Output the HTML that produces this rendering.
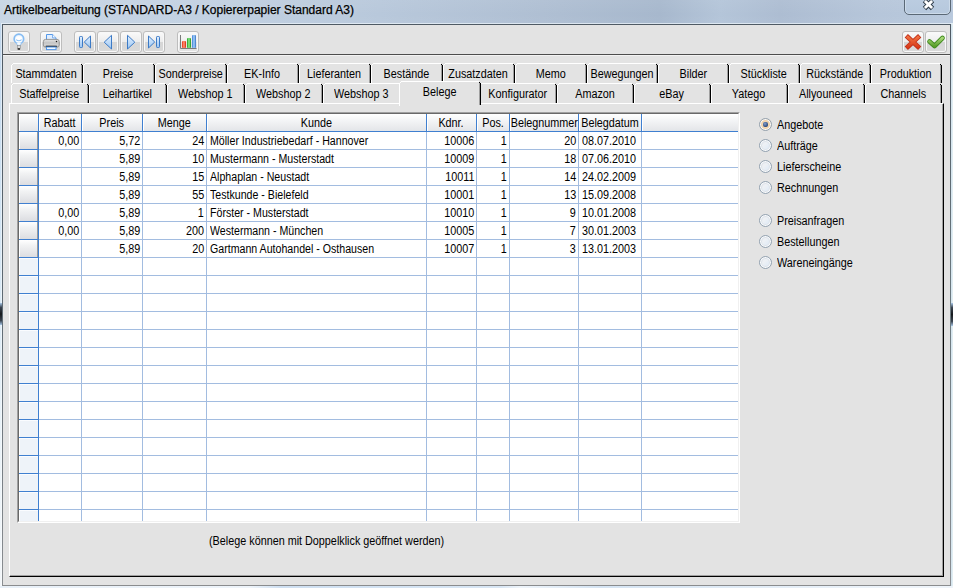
<!DOCTYPE html>
<html><head><meta charset="utf-8">
<style>
html,body{margin:0;padding:0}
body{width:953px;height:588px;overflow:hidden;position:relative;font-family:"Liberation Sans", sans-serif;
 background:#c4d5e8}
#tbar{left:0;top:0;width:953px;height:24px;background:linear-gradient(90deg,#c8d6e5 0,#c2d1e2 200px,#b8c8db 380px,#aebed2 560px,#a7b8cd 660px,#b4c5d9 720px,#adbdd2 780px,#b6c6da 880px,#b9c9dd 953px)}
#tbar2{left:0;top:0;width:953px;height:24px;background:linear-gradient(rgba(255,255,255,0.05),rgba(255,255,255,0) 60%,rgba(255,255,255,0.03))}
div,i{position:absolute;box-sizing:border-box;display:block}
.t{font-size:12px;line-height:14px;white-space:nowrap;color:#000}
.t span{display:inline-block;transform:scaleX(0.9)}
.r{text-align:right}
.c{text-align:center}
#title{left:4px;top:3px;font-size:12px;line-height:15px;color:#000;white-space:nowrap;-webkit-text-stroke:0.25px #000;text-shadow:0 0 6px rgba(255,255,255,0.35)}
#frameL{left:0;top:23px;width:2px;height:565px;background:linear-gradient(#c0d6ec 0,#d4e6f4 40%,#e8f2f8 70%,#f2f6f9 100%)}
#frameL2{left:1px;top:23px;width:1px;height:565px;background:rgba(255,255,255,0.45)}
#blobL{left:0;top:303px;width:2px;height:22px;background:linear-gradient(#a9c8e8,#3a4450 20%,#15181c 50%,#3a4450 80%,#a9c8e8)}
#client{left:2px;top:24px;width:949px;height:562px;background:#e3e3e3}
#bdT{left:2px;top:24px;width:949px;height:1px;background:#4f5a64}
#hlT{left:1px;top:23px;width:951px;height:1px;background:rgba(235,243,250,0.75)}
#bdL{left:2px;top:24px;width:1px;height:562px;background:linear-gradient(#4f5a64 0,#5e6a73 50%,#8a8e92 100%)}
#bdR{left:950px;top:24px;width:1px;height:562px;background:linear-gradient(#4f5a64 0,#6c7a80 50%,#8a8e92 100%)}
#bdB{left:2px;top:585px;width:949px;height:1px;background:#8a8c8e}
#desk{left:0;top:586px;width:953px;height:2px;background:linear-gradient(90deg,#e8f0f8 0,#eef4fa 250px,#cfe0f2 280px,#d8e6f4 500px,#eef4fa 520px,#d5e4f3 600px,#eef4fa 900px)}
#frameR{left:951px;top:23px;width:2px;height:565px;background:linear-gradient(90deg,#d0e0ec,#e6f2f4)}
#blob{left:951px;top:303px;width:2px;height:23px;background:linear-gradient(#a9c8e8,#3a4450 20%,#15181c 50%,#3a4450 80%,#a9c8e8)}
#toolbarline{left:3px;top:54px;width:947px;height:1px;background:#4d4d4d}
#toolbarline2{left:3px;top:55px;width:947px;height:1px;background:#f3f3f3}
.btn{width:22px;height:22px;border:1px solid #bdbdbd;border-radius:3px;
 background:linear-gradient(#fafafa 0,#ececec 10px,#d6d6d6 10px,#d9d9d9 100%);box-shadow:inset 0 0 0 1px #f8f8f8}
.btn.flat{background:linear-gradient(#fafafa 0,#eeeeee 10px,#e4e4e4 10px,#e2e2e2 100%)}
#panel{left:9px;top:103px;width:935px;height:474px;border-left:1px solid #fff;border-top:1px solid #fff;border-right:1px solid #000;border-bottom:1px solid #000;background:#e3e3e3}
#panel2{left:10px;top:104px;width:933px;height:472px;border-right:1px solid #a0a0a0;border-bottom:1px solid #a0a0a0}
.tab{background:#e3e3e3}
.tab .tl{left:0;top:2px;width:1px;bottom:0;background:#fff}
.tab .tt{left:2px;top:0;right:2px;height:1px;background:#fff}
.tab .tc{left:1px;top:1px;width:1px;height:1px;background:#fff}
.tab .tr{right:0;top:2px;width:1px;bottom:0;background:#000}
.tab .tc2{right:1px;top:1px;width:1px;height:1px;background:#000}
.tab .td{right:1px;top:2px;width:1px;bottom:0;background:#a0a0a0}
.tab.sel .tl{bottom:-1px}
#gridbox{left:17px;top:112px;width:723px;height:411px;border-top:1px solid #a0a0a0;border-left:1px solid #a0a0a0;border-right:1px solid #fff;border-bottom:1px solid #fff}
#gridbox2{left:18px;top:113px;width:721px;height:409px;border-top:1px solid #696969;border-left:1px solid #696969;border-right:1px solid #f0f0f0;border-bottom:1px solid #f0f0f0;background:#fff}
.hdr{background:linear-gradient(#ffffff 0,#f6f7f8 30%,#e3e5e8 100%)}
.rh{background:linear-gradient(#ffffff 0,#f2f3f4 30%,#dcdde1 100%);border-left:1px solid #fff;border-right:1px solid #9a9a9a}
.rhe{background:#eef3f9;border-left:1px solid #fff;border-top:1px solid #fafcff}
.radio{width:13px;height:13px;border-radius:50%;border:1px solid #93a2b1;background:linear-gradient(135deg,#e6e9ee 0,#eef1f5 40%,#d9e7f6 100%);box-shadow:inset 0 0 0 1px #fafbfc,inset 0 0 0 2px #dde3ea}
.radio.on{background:#f3d7b0;box-shadow:inset 0 0 0 1px #fafbfc,inset 0 0 0 2px #f0d0a8}
.radio.on::after{content:"";position:absolute;left:3px;top:3px;width:5px;height:5px;border-radius:40%;background:radial-gradient(circle at 40% 35%,#7f9ccc 0,#2b4677 75%)}
#close{left:904px;top:-4px;width:47px;height:19px;border:1px solid #5a6876;border-radius:0 0 5px 5px;background:linear-gradient(#bccde1,#b6c8dd);box-shadow:inset 0 0 0 1px #cddbea}
</style></head><body>
<div id="tbar"></div><div id="tbar2"></div>
<div id="title">Artikelbearbeitung (STANDARD-A3 / Kopiererpapier Standard A3)</div>
<div id="close"><svg width="47" height="19" style="position:absolute;left:-1px;top:-1px" viewBox="0 0 47 19"><path d="M20.5 4.5 L28.5 12.5 M28.5 4.5 L20.5 12.5" stroke="#2e3a46" stroke-width="4.8" stroke-linecap="butt"/><path d="M20.9 4.9 L28.1 12.1 M28.1 4.9 L20.9 12.1" stroke="#ffffff" stroke-width="2.8" stroke-linecap="butt"/></svg></div>
<div id="frameL"></div>
<div id="frameR"></div><div id="blob"></div><div id="frameL2"></div><div id="blobL"></div>
<div id="desk"></div>
<div id="client"></div><div id="bdT"></div><div id="hlT"></div><div id="bdL"></div><div id="bdR"></div><div id="bdB"></div>
<div id="toolbarline"></div>
<div id="toolbarline2"></div>
<div class="btn" style="left:8px;top:31px"></div>
<div class="btn" style="left:40px;top:31px"></div>
<div class="btn" style="left:74px;top:31px"></div>
<div class="btn" style="left:97px;top:31px"></div>
<div class="btn" style="left:120px;top:31px"></div>
<div class="btn" style="left:143px;top:31px"></div>
<div class="btn flat" style="left:177px;top:31px"></div>
<div class="btn" style="left:902px;top:31px"></div>
<div class="btn" style="left:925px;top:31px"></div>
<svg width="953" height="60" style="position:absolute;left:0;top:0" viewBox="0 0 953 60">
 <defs>
  <linearGradient id="gb" x1="0" y1="0" x2="0" y2="1"><stop offset="0" stop-color="#e2f0ff"/><stop offset="1" stop-color="#9cc6f2"/></linearGradient>
  <radialGradient id="bulb" cx="0.5" cy="0.5" r="0.55"><stop offset="0" stop-color="#ffffff"/><stop offset="0.55" stop-color="#f4f9ff"/><stop offset="1" stop-color="#b8daff"/></radialGradient>
  <linearGradient id="pr" x1="0" y1="0" x2="0" y2="1"><stop offset="0" stop-color="#e4e4e4"/><stop offset="0.45" stop-color="#c4c4c4"/><stop offset="0.75" stop-color="#d6d6d6"/><stop offset="1" stop-color="#b0b0b0"/></linearGradient>
  <linearGradient id="rb" x1="0" y1="0" x2="1" y2="0"><stop offset="0" stop-color="#e83010"/><stop offset="0.5" stop-color="#ff9a80"/><stop offset="1" stop-color="#d82000"/></linearGradient>
  <linearGradient id="gg" x1="0" y1="0" x2="1" y2="0"><stop offset="0" stop-color="#1e9a1e"/><stop offset="0.5" stop-color="#90ef90"/><stop offset="1" stop-color="#1a8a1a"/></linearGradient>
  <linearGradient id="bb" x1="0" y1="0" x2="1" y2="0"><stop offset="0" stop-color="#3b7fd0"/><stop offset="0.5" stop-color="#a8d2ff"/><stop offset="1" stop-color="#2f6fc0"/></linearGradient>
  <linearGradient id="xr" x1="0" y1="0" x2="0" y2="1"><stop offset="0" stop-color="#f07040"/><stop offset="1" stop-color="#d83a18"/></linearGradient>
  <linearGradient id="ck" x1="0" y1="0" x2="0" y2="1"><stop offset="0" stop-color="#a8d878"/><stop offset="1" stop-color="#5a9e2a"/></linearGradient>
 </defs>
 <!-- lightbulb -->
 <circle cx="18.9" cy="38.9" r="4.8" fill="url(#bulb)" stroke="#86bcf2" stroke-width="1.6"/>
 <path d="M16.3 42.3 L17.3 45.4 L20.5 45.4 L21.5 42.3 Z" fill="#f6faff" stroke="#93c3f2" stroke-width="0.9"/>
 <circle cx="18.9" cy="39.6" r="3.2" fill="#ffffff"/>
 <path d="M16.2 39.6 Q18.9 42 21.6 39.6" fill="none" stroke="#8ec0f2" stroke-width="1.1"/>
 <rect x="17.3" y="45.5" width="3.1" height="3" fill="#dcdcdc" stroke="#8a8a8a" stroke-width="0.6"/>
 <rect x="17.6" y="48.3" width="2.5" height="1.4" rx="0.5" fill="#1e1e1e"/>
 <!-- printer -->
 <path d="M46.5 34.5 L52.6 34.5 L56 37.9 L56 40.5 L46.5 40.5 Z" fill="#e0eeff" stroke="#5598e8" stroke-width="1"/>
 <path d="M52.6 34.5 L52.6 37.9 L56 37.9" fill="#ffffff" stroke="#5598e8" stroke-width="0.8"/>
 <rect x="43.4" y="39.4" width="15.8" height="7.8" rx="2.2" fill="url(#pr)" stroke="#8e8e8e" stroke-width="0.9"/>
 <rect x="45.8" y="45.7" width="11" height="1.3" fill="#1c1c1c"/>
 <rect x="46.5" y="47" width="9.5" height="2.6" fill="#f2f8ff" stroke="#5598e8" stroke-width="1"/>
 <circle cx="56.5" cy="41.6" r="0.75" fill="#1c1c1c"/>
 <!-- first -->
 <rect x="79.5" y="36.5" width="3" height="11" rx="0.8" fill="url(#gb)" stroke="#3c7ac6" stroke-width="1"/>
 <path d="M90.5 36 L84.3 42 L90.5 48 Z" fill="url(#gb)" stroke="#3c7ac6" stroke-width="1" stroke-linejoin="round"/>
 <!-- prev -->
 <path d="M111.5 35.3 L104.2 42.2 L111.5 49 Z" fill="url(#gb)" stroke="#3c7ac6" stroke-width="1" stroke-linejoin="round"/>
 <!-- next -->
 <path d="M127.5 35.3 L134.8 42.2 L127.5 49 Z" fill="url(#gb)" stroke="#3c7ac6" stroke-width="1" stroke-linejoin="round"/>
 <!-- last -->
 <path d="M148.5 36 L154.7 42 L148.5 48 Z" fill="url(#gb)" stroke="#3c7ac6" stroke-width="1" stroke-linejoin="round"/>
 <rect x="156.5" y="36.5" width="3" height="11" rx="0.8" fill="url(#gb)" stroke="#3c7ac6" stroke-width="1"/>
 <!-- chart -->
 <path d="M180.5 35 L180.5 48.5 L196.5 48.5" fill="none" stroke="#7a7a7a" stroke-width="1"/>
 <rect x="182" y="41" width="4" height="7" rx="1" fill="url(#rb)"/>
 <rect x="187" y="38" width="4" height="10" rx="1" fill="url(#gg)"/>
 <rect x="192" y="35" width="4" height="13" rx="1" fill="url(#bb)"/>
 <!-- cancel X -->
 <path d="M906.3 35.8 L919.7 48.2 M919.7 35.8 L906.3 48.2" stroke="#c3301a" stroke-width="4.8" stroke-linecap="butt"/>
 <path d="M906.9 36.4 L919.1 47.6 M919.1 36.4 L906.9 47.6" stroke="url(#xr)" stroke-width="3.0" stroke-linecap="butt"/>
 <!-- ok check -->
 <path d="M929.5 41.5 L934.5 46 L942.5 38" fill="none" stroke="#3f8a1e" stroke-width="4.6" stroke-linecap="round" stroke-linejoin="round"/>
 <path d="M929.5 41.5 L934.5 46 L942.5 38" fill="none" stroke="url(#ck)" stroke-width="3" stroke-linecap="round" stroke-linejoin="round"/>
</svg>
<div class="tab" style="left:11px;top:63px;width:72px;height:20px"><i class="tl"></i><i class="tt"></i><i class="tr"></i><i class="td"></i><i class="tc"></i><i class="tc2"></i></div>
<div class="t c" style="left:-153.5px;width:400px;top:67px;"><span style="transform-origin:50% 0">Stammdaten</span></div>
<div class="tab" style="left:83px;top:63px;width:72px;height:20px"><i class="tl"></i><i class="tt"></i><i class="tr"></i><i class="td"></i><i class="tc"></i><i class="tc2"></i></div>
<div class="t c" style="left:-81.5px;width:400px;top:67px;"><span style="transform-origin:50% 0">Preise</span></div>
<div class="tab" style="left:155px;top:63px;width:72px;height:20px"><i class="tl"></i><i class="tt"></i><i class="tr"></i><i class="td"></i><i class="tc"></i><i class="tc2"></i></div>
<div class="t c" style="left:-9.5px;width:400px;top:67px;"><span style="transform-origin:50% 0">Sonderpreise</span></div>
<div class="tab" style="left:227px;top:63px;width:72px;height:20px"><i class="tl"></i><i class="tt"></i><i class="tr"></i><i class="td"></i><i class="tc"></i><i class="tc2"></i></div>
<div class="t c" style="left:62.5px;width:400px;top:67px;"><span style="transform-origin:50% 0">EK-Info</span></div>
<div class="tab" style="left:299px;top:63px;width:72px;height:20px"><i class="tl"></i><i class="tt"></i><i class="tr"></i><i class="td"></i><i class="tc"></i><i class="tc2"></i></div>
<div class="t c" style="left:134.5px;width:400px;top:67px;"><span style="transform-origin:50% 0">Lieferanten</span></div>
<div class="tab" style="left:371px;top:63px;width:72px;height:20px"><i class="tl"></i><i class="tt"></i><i class="tr"></i><i class="td"></i><i class="tc"></i><i class="tc2"></i></div>
<div class="t c" style="left:206.5px;width:400px;top:67px;"><span style="transform-origin:50% 0">Bestände</span></div>
<div class="tab" style="left:443px;top:63px;width:72px;height:20px"><i class="tl"></i><i class="tt"></i><i class="tr"></i><i class="td"></i><i class="tc"></i><i class="tc2"></i></div>
<div class="t c" style="left:278.5px;width:400px;top:67px;"><span style="transform-origin:50% 0">Zusatzdaten</span></div>
<div class="tab" style="left:515px;top:63px;width:72px;height:20px"><i class="tl"></i><i class="tt"></i><i class="tr"></i><i class="td"></i><i class="tc"></i><i class="tc2"></i></div>
<div class="t c" style="left:350.5px;width:400px;top:67px;"><span style="transform-origin:50% 0">Memo</span></div>
<div class="tab" style="left:587px;top:63px;width:71px;height:20px"><i class="tl"></i><i class="tt"></i><i class="tr"></i><i class="td"></i><i class="tc"></i><i class="tc2"></i></div>
<div class="t c" style="left:422.0px;width:400px;top:67px;"><span style="transform-origin:50% 0">Bewegungen</span></div>
<div class="tab" style="left:658px;top:63px;width:71px;height:20px"><i class="tl"></i><i class="tt"></i><i class="tr"></i><i class="td"></i><i class="tc"></i><i class="tc2"></i></div>
<div class="t c" style="left:493.0px;width:400px;top:67px;"><span style="transform-origin:50% 0">Bilder</span></div>
<div class="tab" style="left:729px;top:63px;width:71px;height:20px"><i class="tl"></i><i class="tt"></i><i class="tr"></i><i class="td"></i><i class="tc"></i><i class="tc2"></i></div>
<div class="t c" style="left:564.0px;width:400px;top:67px;"><span style="transform-origin:50% 0">Stückliste</span></div>
<div class="tab" style="left:800px;top:63px;width:71px;height:20px"><i class="tl"></i><i class="tt"></i><i class="tr"></i><i class="td"></i><i class="tc"></i><i class="tc2"></i></div>
<div class="t c" style="left:635.0px;width:400px;top:67px;"><span style="transform-origin:50% 0">Rückstände</span></div>
<div class="tab" style="left:871px;top:63px;width:71px;height:20px"><i class="tl"></i><i class="tt"></i><i class="tr"></i><i class="td"></i><i class="tc"></i><i class="tc2"></i></div>
<div class="t c" style="left:706.0px;width:400px;top:67px;"><span style="transform-origin:50% 0">Produktion</span></div>
<div class="tab" style="left:11px;top:83px;width:78px;height:20px"><i class="tl"></i><i class="tt"></i><i class="tr"></i><i class="td"></i><i class="tc"></i><i class="tc2"></i></div>
<div class="t c" style="left:-150.5px;width:400px;top:87px;"><span style="transform-origin:50% 0">Staffelpreise</span></div>
<div class="tab" style="left:89px;top:83px;width:78px;height:20px"><i class="tl"></i><i class="tt"></i><i class="tr"></i><i class="td"></i><i class="tc"></i><i class="tc2"></i></div>
<div class="t c" style="left:-72.5px;width:400px;top:87px;"><span style="transform-origin:50% 0">Leihartikel</span></div>
<div class="tab" style="left:167px;top:83px;width:78px;height:20px"><i class="tl"></i><i class="tt"></i><i class="tr"></i><i class="td"></i><i class="tc"></i><i class="tc2"></i></div>
<div class="t c" style="left:5.5px;width:400px;top:87px;"><span style="transform-origin:50% 0">Webshop 1</span></div>
<div class="tab" style="left:245px;top:83px;width:78px;height:20px"><i class="tl"></i><i class="tt"></i><i class="tr"></i><i class="td"></i><i class="tc"></i><i class="tc2"></i></div>
<div class="t c" style="left:83.5px;width:400px;top:87px;"><span style="transform-origin:50% 0">Webshop 2</span></div>
<div class="tab" style="left:323px;top:83px;width:78px;height:20px"><i class="tl"></i><i class="tt"></i><i class="tr"></i><i class="td"></i><i class="tc"></i><i class="tc2"></i></div>
<div class="t c" style="left:161.5px;width:400px;top:87px;"><span style="transform-origin:50% 0">Webshop 3</span></div>
<div class="tab" style="left:479px;top:83px;width:78px;height:20px"><i class="tl"></i><i class="tt"></i><i class="tr"></i><i class="td"></i><i class="tc"></i><i class="tc2"></i></div>
<div class="t c" style="left:317.5px;width:400px;top:87px;"><span style="transform-origin:50% 0">Konfigurator</span></div>
<div class="tab" style="left:557px;top:83px;width:77px;height:20px"><i class="tl"></i><i class="tt"></i><i class="tr"></i><i class="td"></i><i class="tc"></i><i class="tc2"></i></div>
<div class="t c" style="left:395.0px;width:400px;top:87px;"><span style="transform-origin:50% 0">Amazon</span></div>
<div class="tab" style="left:634px;top:83px;width:77px;height:20px"><i class="tl"></i><i class="tt"></i><i class="tr"></i><i class="td"></i><i class="tc"></i><i class="tc2"></i></div>
<div class="t c" style="left:472.0px;width:400px;top:87px;"><span style="transform-origin:50% 0">eBay</span></div>
<div class="tab" style="left:711px;top:83px;width:77px;height:20px"><i class="tl"></i><i class="tt"></i><i class="tr"></i><i class="td"></i><i class="tc"></i><i class="tc2"></i></div>
<div class="t c" style="left:549.0px;width:400px;top:87px;"><span style="transform-origin:50% 0">Yatego</span></div>
<div class="tab" style="left:788px;top:83px;width:77px;height:20px"><i class="tl"></i><i class="tt"></i><i class="tr"></i><i class="td"></i><i class="tc"></i><i class="tc2"></i></div>
<div class="t c" style="left:626.0px;width:400px;top:87px;"><span style="transform-origin:50% 0">Allyouneed</span></div>
<div class="tab" style="left:865px;top:83px;width:77px;height:20px"><i class="tl"></i><i class="tt"></i><i class="tr"></i><i class="td"></i><i class="tc"></i><i class="tc2"></i></div>
<div class="t c" style="left:703.0px;width:400px;top:87px;"><span style="transform-origin:50% 0">Channels</span></div>
<div id="panel"></div>
<div id="panel2"></div>
<div class="tab sel" style="left:399px;top:81px;width:82px;height:24px"><i class="tl"></i><i class="tt"></i><i class="tr"></i><i class="td"></i><i class="tc"></i><i class="tc2"></i></div><div class="t c" style="left:240px;width:400px;top:85px;"><span style="transform-origin:50% 0">Belege</span></div>
<div id="gridbox"></div>
<div id="gridbox2"></div>
<div class="hdr" style="left:19px;top:114px;width:719px;height:17px"></div>
<div class="ln" style="left:19px;top:114px;width:1px;height:17px;background:#fff"></div>
<div class="ln" style="left:39px;top:114px;width:1px;height:17px;background:#fff"></div>
<div class="ln" style="left:82px;top:114px;width:1px;height:17px;background:#fff"></div>
<div class="ln" style="left:143px;top:114px;width:1px;height:17px;background:#fff"></div>
<div class="ln" style="left:207px;top:114px;width:1px;height:17px;background:#fff"></div>
<div class="ln" style="left:427px;top:114px;width:1px;height:17px;background:#fff"></div>
<div class="ln" style="left:477px;top:114px;width:1px;height:17px;background:#fff"></div>
<div class="ln" style="left:510px;top:114px;width:1px;height:17px;background:#fff"></div>
<div class="ln" style="left:579px;top:114px;width:1px;height:17px;background:#fff"></div>
<div class="ln" style="left:642px;top:114px;width:1px;height:17px;background:#fff"></div>
<div class="ln" style="left:39px;top:132px;width:699px;height:389px;background:#fff"></div>
<div class="rh" style="left:19px;top:132px;width:19px;height:17px"></div>
<div class="rh" style="left:19px;top:150px;width:19px;height:17px"></div>
<div class="rh" style="left:19px;top:168px;width:19px;height:17px"></div>
<div class="rh" style="left:19px;top:186px;width:19px;height:17px"></div>
<div class="rh" style="left:19px;top:204px;width:19px;height:17px"></div>
<div class="rh" style="left:19px;top:222px;width:19px;height:17px"></div>
<div class="rh" style="left:19px;top:240px;width:19px;height:17px"></div>
<div class="rhe" style="left:19px;top:258px;width:19px;height:17px"></div>
<div class="rhe" style="left:19px;top:276px;width:19px;height:17px"></div>
<div class="rhe" style="left:19px;top:294px;width:19px;height:17px"></div>
<div class="rhe" style="left:19px;top:312px;width:19px;height:17px"></div>
<div class="rhe" style="left:19px;top:330px;width:19px;height:17px"></div>
<div class="rhe" style="left:19px;top:348px;width:19px;height:17px"></div>
<div class="rhe" style="left:19px;top:366px;width:19px;height:17px"></div>
<div class="rhe" style="left:19px;top:384px;width:19px;height:17px"></div>
<div class="rhe" style="left:19px;top:402px;width:19px;height:17px"></div>
<div class="rhe" style="left:19px;top:420px;width:19px;height:17px"></div>
<div class="rhe" style="left:19px;top:438px;width:19px;height:17px"></div>
<div class="rhe" style="left:19px;top:456px;width:19px;height:17px"></div>
<div class="rhe" style="left:19px;top:474px;width:19px;height:17px"></div>
<div class="rhe" style="left:19px;top:492px;width:19px;height:17px"></div>
<div class="rhe" style="left:19px;top:510px;width:19px;height:11px"></div>
<div class="ln" style="left:19px;top:131px;width:719px;height:1px;background:#3f7fd0"></div>
<div class="ln" style="left:39px;top:149px;width:699px;height:1px;background:#a2bce0"></div>
<div class="ln" style="left:19px;top:149px;width:20px;height:1px;background:#3f7fd0"></div>
<div class="ln" style="left:39px;top:167px;width:699px;height:1px;background:#a2bce0"></div>
<div class="ln" style="left:19px;top:167px;width:20px;height:1px;background:#3f7fd0"></div>
<div class="ln" style="left:39px;top:185px;width:699px;height:1px;background:#a2bce0"></div>
<div class="ln" style="left:19px;top:185px;width:20px;height:1px;background:#3f7fd0"></div>
<div class="ln" style="left:39px;top:203px;width:699px;height:1px;background:#a2bce0"></div>
<div class="ln" style="left:19px;top:203px;width:20px;height:1px;background:#3f7fd0"></div>
<div class="ln" style="left:39px;top:221px;width:699px;height:1px;background:#a2bce0"></div>
<div class="ln" style="left:19px;top:221px;width:20px;height:1px;background:#3f7fd0"></div>
<div class="ln" style="left:39px;top:239px;width:699px;height:1px;background:#a2bce0"></div>
<div class="ln" style="left:19px;top:239px;width:20px;height:1px;background:#3f7fd0"></div>
<div class="ln" style="left:39px;top:257px;width:699px;height:1px;background:#a2bce0"></div>
<div class="ln" style="left:19px;top:257px;width:20px;height:1px;background:#3f7fd0"></div>
<div class="ln" style="left:39px;top:275px;width:699px;height:1px;background:#a2bce0"></div>
<div class="ln" style="left:19px;top:275px;width:20px;height:1px;background:#3f7fd0"></div>
<div class="ln" style="left:39px;top:293px;width:699px;height:1px;background:#a2bce0"></div>
<div class="ln" style="left:19px;top:293px;width:20px;height:1px;background:#3f7fd0"></div>
<div class="ln" style="left:39px;top:311px;width:699px;height:1px;background:#a2bce0"></div>
<div class="ln" style="left:19px;top:311px;width:20px;height:1px;background:#3f7fd0"></div>
<div class="ln" style="left:39px;top:329px;width:699px;height:1px;background:#a2bce0"></div>
<div class="ln" style="left:19px;top:329px;width:20px;height:1px;background:#3f7fd0"></div>
<div class="ln" style="left:39px;top:347px;width:699px;height:1px;background:#a2bce0"></div>
<div class="ln" style="left:19px;top:347px;width:20px;height:1px;background:#3f7fd0"></div>
<div class="ln" style="left:39px;top:365px;width:699px;height:1px;background:#a2bce0"></div>
<div class="ln" style="left:19px;top:365px;width:20px;height:1px;background:#3f7fd0"></div>
<div class="ln" style="left:39px;top:383px;width:699px;height:1px;background:#a2bce0"></div>
<div class="ln" style="left:19px;top:383px;width:20px;height:1px;background:#3f7fd0"></div>
<div class="ln" style="left:39px;top:401px;width:699px;height:1px;background:#a2bce0"></div>
<div class="ln" style="left:19px;top:401px;width:20px;height:1px;background:#3f7fd0"></div>
<div class="ln" style="left:39px;top:419px;width:699px;height:1px;background:#a2bce0"></div>
<div class="ln" style="left:19px;top:419px;width:20px;height:1px;background:#3f7fd0"></div>
<div class="ln" style="left:39px;top:437px;width:699px;height:1px;background:#a2bce0"></div>
<div class="ln" style="left:19px;top:437px;width:20px;height:1px;background:#3f7fd0"></div>
<div class="ln" style="left:39px;top:455px;width:699px;height:1px;background:#a2bce0"></div>
<div class="ln" style="left:19px;top:455px;width:20px;height:1px;background:#3f7fd0"></div>
<div class="ln" style="left:39px;top:473px;width:699px;height:1px;background:#a2bce0"></div>
<div class="ln" style="left:19px;top:473px;width:20px;height:1px;background:#3f7fd0"></div>
<div class="ln" style="left:39px;top:491px;width:699px;height:1px;background:#a2bce0"></div>
<div class="ln" style="left:19px;top:491px;width:20px;height:1px;background:#3f7fd0"></div>
<div class="ln" style="left:39px;top:509px;width:699px;height:1px;background:#a2bce0"></div>
<div class="ln" style="left:19px;top:509px;width:20px;height:1px;background:#3f7fd0"></div>
<div class="ln" style="left:38px;top:114px;width:1px;height:17px;background:#3f7fd0"></div>
<div class="ln" style="left:38px;top:131px;width:1px;height:390px;background:#3f7fd0"></div>
<div class="ln" style="left:81px;top:114px;width:1px;height:17px;background:#3f7fd0"></div>
<div class="ln" style="left:81px;top:132px;width:1px;height:389px;background:#a2bce0"></div>
<div class="ln" style="left:142px;top:114px;width:1px;height:17px;background:#3f7fd0"></div>
<div class="ln" style="left:142px;top:132px;width:1px;height:389px;background:#a2bce0"></div>
<div class="ln" style="left:206px;top:114px;width:1px;height:17px;background:#3f7fd0"></div>
<div class="ln" style="left:206px;top:132px;width:1px;height:389px;background:#a2bce0"></div>
<div class="ln" style="left:426px;top:114px;width:1px;height:17px;background:#3f7fd0"></div>
<div class="ln" style="left:426px;top:132px;width:1px;height:389px;background:#a2bce0"></div>
<div class="ln" style="left:476px;top:114px;width:1px;height:17px;background:#3f7fd0"></div>
<div class="ln" style="left:476px;top:132px;width:1px;height:389px;background:#a2bce0"></div>
<div class="ln" style="left:509px;top:114px;width:1px;height:17px;background:#3f7fd0"></div>
<div class="ln" style="left:509px;top:132px;width:1px;height:389px;background:#a2bce0"></div>
<div class="ln" style="left:578px;top:114px;width:1px;height:17px;background:#3f7fd0"></div>
<div class="ln" style="left:578px;top:132px;width:1px;height:389px;background:#a2bce0"></div>
<div class="ln" style="left:641px;top:114px;width:1px;height:17px;background:#3f7fd0"></div>
<div class="ln" style="left:641px;top:132px;width:1px;height:389px;background:#a2bce0"></div>
<div class="t c" style="left:-140.0px;width:400px;top:116px;"><span style="transform-origin:50% 0">Rabatt</span></div>
<div class="t c" style="left:-88.0px;width:400px;top:116px;"><span style="transform-origin:50% 0">Preis</span></div>
<div class="t c" style="left:-25.5px;width:400px;top:116px;"><span style="transform-origin:50% 0">Menge</span></div>
<div class="t c" style="left:116.5px;width:400px;top:116px;"><span style="transform-origin:50% 0">Kunde</span></div>
<div class="t c" style="left:251.5px;width:400px;top:116px;"><span style="transform-origin:50% 0">Kdnr.</span></div>
<div class="t c" style="left:293.0px;width:400px;top:116px;"><span style="transform-origin:50% 0">Pos.</span></div>
<div class="t c" style="left:344.0px;width:400px;top:116px;"><span style="transform-origin:50% 0">Belegnummer</span></div>
<div class="t c" style="left:410.0px;width:400px;top:116px;"><span style="transform-origin:50% 0">Belegdatum</span></div>
<div class="t r" style="right:874px;top:134px;"><span style="transform-origin:100% 0;transform:scaleX(0.9)">0,00</span></div>
<div class="t r" style="right:813px;top:134px;"><span style="transform-origin:100% 0;transform:scaleX(0.9)">5,72</span></div>
<div class="t r" style="right:749px;top:134px;"><span style="transform-origin:100% 0;transform:scaleX(0.9)">24</span></div>
<div class="t" style="left:210px;top:134px;"><span style="transform-origin:0 0;transform:scaleX(0.885)">Möller Industriebedarf - Hannover</span></div>
<div class="t r" style="right:479px;top:134px;"><span style="transform-origin:100% 0;transform:scaleX(0.9)">10006</span></div>
<div class="t r" style="right:446px;top:134px;"><span style="transform-origin:100% 0;transform:scaleX(0.9)">1</span></div>
<div class="t r" style="right:377px;top:134px;"><span style="transform-origin:100% 0;transform:scaleX(0.9)">20</span></div>
<div class="t" style="left:582px;top:134px;"><span style="transform-origin:0 0;transform:scaleX(0.9)">08.07.2010</span></div>
<div class="t r" style="right:813px;top:152px;"><span style="transform-origin:100% 0;transform:scaleX(0.9)">5,89</span></div>
<div class="t r" style="right:749px;top:152px;"><span style="transform-origin:100% 0;transform:scaleX(0.9)">10</span></div>
<div class="t" style="left:210px;top:152px;"><span style="transform-origin:0 0;transform:scaleX(0.885)">Mustermann - Musterstadt</span></div>
<div class="t r" style="right:479px;top:152px;"><span style="transform-origin:100% 0;transform:scaleX(0.9)">10009</span></div>
<div class="t r" style="right:446px;top:152px;"><span style="transform-origin:100% 0;transform:scaleX(0.9)">1</span></div>
<div class="t r" style="right:377px;top:152px;"><span style="transform-origin:100% 0;transform:scaleX(0.9)">18</span></div>
<div class="t" style="left:582px;top:152px;"><span style="transform-origin:0 0;transform:scaleX(0.9)">07.06.2010</span></div>
<div class="t r" style="right:813px;top:170px;"><span style="transform-origin:100% 0;transform:scaleX(0.9)">5,89</span></div>
<div class="t r" style="right:749px;top:170px;"><span style="transform-origin:100% 0;transform:scaleX(0.9)">15</span></div>
<div class="t" style="left:210px;top:170px;"><span style="transform-origin:0 0;transform:scaleX(0.885)">Alphaplan - Neustadt</span></div>
<div class="t r" style="right:479px;top:170px;"><span style="transform-origin:100% 0;transform:scaleX(0.9)">10011</span></div>
<div class="t r" style="right:446px;top:170px;"><span style="transform-origin:100% 0;transform:scaleX(0.9)">1</span></div>
<div class="t r" style="right:377px;top:170px;"><span style="transform-origin:100% 0;transform:scaleX(0.9)">14</span></div>
<div class="t" style="left:582px;top:170px;"><span style="transform-origin:0 0;transform:scaleX(0.9)">24.02.2009</span></div>
<div class="t r" style="right:813px;top:188px;"><span style="transform-origin:100% 0;transform:scaleX(0.9)">5,89</span></div>
<div class="t r" style="right:749px;top:188px;"><span style="transform-origin:100% 0;transform:scaleX(0.9)">55</span></div>
<div class="t" style="left:210px;top:188px;"><span style="transform-origin:0 0;transform:scaleX(0.885)">Testkunde - Bielefeld</span></div>
<div class="t r" style="right:479px;top:188px;"><span style="transform-origin:100% 0;transform:scaleX(0.9)">10001</span></div>
<div class="t r" style="right:446px;top:188px;"><span style="transform-origin:100% 0;transform:scaleX(0.9)">1</span></div>
<div class="t r" style="right:377px;top:188px;"><span style="transform-origin:100% 0;transform:scaleX(0.9)">13</span></div>
<div class="t" style="left:582px;top:188px;"><span style="transform-origin:0 0;transform:scaleX(0.9)">15.09.2008</span></div>
<div class="t r" style="right:874px;top:206px;"><span style="transform-origin:100% 0;transform:scaleX(0.9)">0,00</span></div>
<div class="t r" style="right:813px;top:206px;"><span style="transform-origin:100% 0;transform:scaleX(0.9)">5,89</span></div>
<div class="t r" style="right:749px;top:206px;"><span style="transform-origin:100% 0;transform:scaleX(0.9)">1</span></div>
<div class="t" style="left:210px;top:206px;"><span style="transform-origin:0 0;transform:scaleX(0.885)">Förster - Musterstadt</span></div>
<div class="t r" style="right:479px;top:206px;"><span style="transform-origin:100% 0;transform:scaleX(0.9)">10010</span></div>
<div class="t r" style="right:446px;top:206px;"><span style="transform-origin:100% 0;transform:scaleX(0.9)">1</span></div>
<div class="t r" style="right:377px;top:206px;"><span style="transform-origin:100% 0;transform:scaleX(0.9)">9</span></div>
<div class="t" style="left:582px;top:206px;"><span style="transform-origin:0 0;transform:scaleX(0.9)">10.01.2008</span></div>
<div class="t r" style="right:874px;top:224px;"><span style="transform-origin:100% 0;transform:scaleX(0.9)">0,00</span></div>
<div class="t r" style="right:813px;top:224px;"><span style="transform-origin:100% 0;transform:scaleX(0.9)">5,89</span></div>
<div class="t r" style="right:749px;top:224px;"><span style="transform-origin:100% 0;transform:scaleX(0.9)">200</span></div>
<div class="t" style="left:210px;top:224px;"><span style="transform-origin:0 0;transform:scaleX(0.885)">Westermann - München</span></div>
<div class="t r" style="right:479px;top:224px;"><span style="transform-origin:100% 0;transform:scaleX(0.9)">10005</span></div>
<div class="t r" style="right:446px;top:224px;"><span style="transform-origin:100% 0;transform:scaleX(0.9)">1</span></div>
<div class="t r" style="right:377px;top:224px;"><span style="transform-origin:100% 0;transform:scaleX(0.9)">7</span></div>
<div class="t" style="left:582px;top:224px;"><span style="transform-origin:0 0;transform:scaleX(0.9)">30.01.2003</span></div>
<div class="t r" style="right:813px;top:242px;"><span style="transform-origin:100% 0;transform:scaleX(0.9)">5,89</span></div>
<div class="t r" style="right:749px;top:242px;"><span style="transform-origin:100% 0;transform:scaleX(0.9)">20</span></div>
<div class="t" style="left:210px;top:242px;"><span style="transform-origin:0 0;transform:scaleX(0.885)">Gartmann Autohandel - Osthausen</span></div>
<div class="t r" style="right:479px;top:242px;"><span style="transform-origin:100% 0;transform:scaleX(0.9)">10007</span></div>
<div class="t r" style="right:446px;top:242px;"><span style="transform-origin:100% 0;transform:scaleX(0.9)">1</span></div>
<div class="t r" style="right:377px;top:242px;"><span style="transform-origin:100% 0;transform:scaleX(0.9)">3</span></div>
<div class="t" style="left:582px;top:242px;"><span style="transform-origin:0 0;transform:scaleX(0.9)">13.01.2003</span></div>
<div class="radio on" style="left:759px;top:118px"></div>
<div class="t" style="left:777px;top:118px;"><span style="transform-origin:0 0;transform:scaleX(0.9)">Angebote</span></div>
<div class="radio" style="left:759px;top:139px"></div>
<div class="t" style="left:777px;top:139px;"><span style="transform-origin:0 0;transform:scaleX(0.9)">Aufträge</span></div>
<div class="radio" style="left:759px;top:160px"></div>
<div class="t" style="left:777px;top:160px;"><span style="transform-origin:0 0;transform:scaleX(0.9)">Lieferscheine</span></div>
<div class="radio" style="left:759px;top:181px"></div>
<div class="t" style="left:777px;top:181px;"><span style="transform-origin:0 0;transform:scaleX(0.9)">Rechnungen</span></div>
<div class="radio" style="left:759px;top:214px"></div>
<div class="t" style="left:777px;top:214px;"><span style="transform-origin:0 0;transform:scaleX(0.9)">Preisanfragen</span></div>
<div class="radio" style="left:759px;top:235px"></div>
<div class="t" style="left:777px;top:235px;"><span style="transform-origin:0 0;transform:scaleX(0.9)">Bestellungen</span></div>
<div class="radio" style="left:759px;top:256px"></div>
<div class="t" style="left:777px;top:256px;"><span style="transform-origin:0 0;transform:scaleX(0.9)">Wareneingänge</span></div>
<div class="t" style="left:209px;top:534px;"><span style="transform-origin:0 0;transform:scaleX(0.9)">(Belege können mit Doppelklick geöffnet werden)</span></div>
</body></html>
